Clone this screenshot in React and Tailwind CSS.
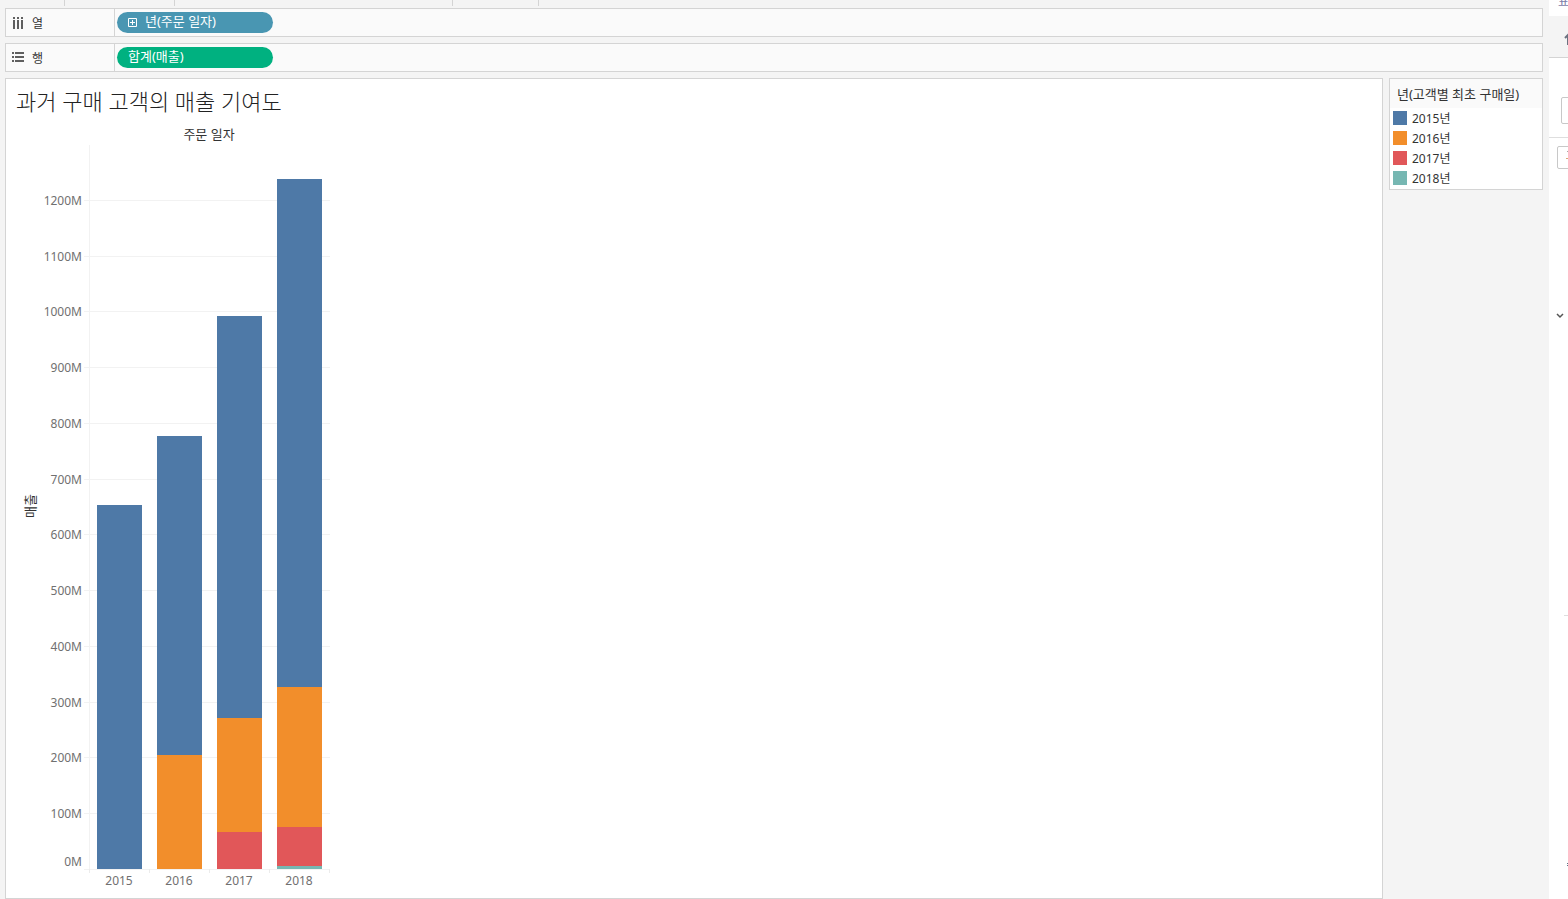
import React from "react";

const YEARS = [
  { label: "2015년", swatch: "bg-[#4e79a7]", fill: "fill-[#4e79a7]" },
  { label: "2016년", swatch: "bg-[#f28e2b]", fill: "fill-[#f28e2b]" },
  { label: "2017년", swatch: "bg-[#e15759]", fill: "fill-[#e15759]" },
  { label: "2018년", swatch: "bg-[#76b7b2]", fill: "fill-[#76b7b2]" },
];

// sales in millions per first-purchase year (same order as YEARS)
const SALES = [
  { year: 2015, values: [653, 0, 0, 0] },
  { year: 2016, values: [572, 205, 0, 0] },
  { year: 2017, values: [721, 205, 66, 0] },
  { year: 2018, values: [911, 250, 70, 6] },
];

const TICKS = [0, 100, 200, 300, 400, 500, 600, 700, 800, 900, 1000, 1100, 1200];

const PLOT = { left: 83, right: 324, top: 28, bottom: 752 };
const COLUMN = 60;
const BAR = 45;

const yFor = (value) => PLOT.bottom - Math.round(value * 0.5577);

function ColumnsIcon() {
  return (
    <svg className="h-3 w-3 fill-[#5f5f5f]" viewBox="0 0 12 12" aria-hidden="true">
      {[1, 5, 9].map((x) => (
        <g key={x}>
          <rect x={x} y="0" width="2" height="2" />
          <rect x={x} y="3" width="2" height="9" />
        </g>
      ))}
    </svg>
  );
}

function RowsIcon() {
  return (
    <svg className="h-3 w-3 fill-[#5f5f5f]" viewBox="0 0 12 12" aria-hidden="true">
      {[0, 4, 8].map((y) => (
        <g key={y}>
          <rect x="0" y={y} width="2" height="2" />
          <rect x="3" y={y} width="9" height="2" />
        </g>
      ))}
    </svg>
  );
}

function ExpandIcon() {
  return (
    <svg className="mt-0.5 h-[9px] w-[9px]" viewBox="0 0 9 9" fill="none" stroke="white" aria-hidden="true">
      <path d="M.5 .5h8v8h-8z M2 4.5h5 M4.5 2v5" />
    </svg>
  );
}

function Shelf({ icon, label, children }) {
  return (
    <section className="flex h-[29px] border border-[#d4d4d4] bg-[#fafafa]">
      <div className="flex w-[109px] items-center gap-2 border-r border-[#d4d4d4] pl-1.5">
        {icon}
        <h2 className="pt-0.5 text-xs leading-4">{label}</h2>
      </div>
      <div className="flex flex-1 items-center pl-0.5">{children}</div>
    </section>
  );
}

function Chart() {
  return (
    <svg className="block h-[776px] w-[330px]" viewBox="0 0 330 776" role="img" aria-label="매출">
      <text x="203" y="22" textAnchor="middle" className="fill-[#333] text-[13px]">
        주문 일자
      </text>
      <text
        transform="translate(29 389) rotate(-90)"
        textAnchor="middle"
        className="fill-[#333] text-[13px]"
      >
        매출
      </text>

      {TICKS.map((tick) => (
        <g key={tick}>
          <rect x={PLOT.left - 5} y={yFor(tick)} width={PLOT.right - PLOT.left + 5} height="1" className="fill-[#f2f2f2]" />
          <text
            x="76"
            y={tick === 0 ? yFor(tick) - 3 : yFor(tick) + 5}
            textAnchor="end"
            className="fill-[#707070] text-xs"
          >
            {tick}M
          </text>
        </g>
      ))}

      <rect x={PLOT.left} y={PLOT.top} width="1" height={PLOT.bottom - PLOT.top} className="fill-[#f2f2f2]" />
      {[0, 1, 2, 3, 4].map((i) => (
        <rect key={i} x={PLOT.left + i * COLUMN} y={PLOT.bottom} width="1" height="4" className="fill-[#ececec]" />
      ))}

      {SALES.map(({ year, values }, column) => {
        const x = PLOT.left + column * COLUMN + 8;
        return (
          <g key={year}>
            {values.map((value, i) => {
              // later cohorts sit at the bottom of the stack
              const below = values.slice(i + 1).reduce((sum, v) => sum + v, 0);
              const top = yFor(below + value);
              return (
                <rect key={i} x={x} y={top} width={BAR} height={yFor(below) - top} className={YEARS[i].fill} />
              );
            })}
            <text x={x + 22} y="768" textAnchor="middle" className="fill-[#707070] text-xs">
              {year}
            </text>
          </g>
        );
      })}
    </svg>
  );
}

function Legend() {
  return (
    <aside className="w-[154px] self-start border border-[#d4d4d4] bg-white">
      <h2 className="bg-[#fafafa] pt-1.5 pb-1 pl-[7px] text-[13px] leading-[19px] whitespace-nowrap">
        년(고객별 최초 구매일)
      </h2>
      <ul className="pb-px">
        {YEARS.map(({ label, swatch }) => (
          <li key={label} className="flex h-5 items-center gap-[5px] pl-[3px] text-xs">
            <span className={`h-3.5 w-3.5 ${swatch}`} />
            <span className="pt-0.5">{label}</span>
          </li>
        ))}
      </ul>
    </aside>
  );
}

// left edge of the neighbouring panel
function SidePanel() {
  return (
    <div className="w-[19px] shrink-0 overflow-hidden bg-white">
      <div className="h-4 overflow-hidden pl-[9px]">
        <p className="-mt-1 text-xs leading-3 text-[#7c7ca8]">표</p>
      </div>
      <div className="flex h-[42px] items-center border-b border-[#d4d4d4] bg-[#f4f4f4] pt-1 pl-[15px]">
        <svg className="h-3 w-3 shrink-0" viewBox="0 0 12 12" fill="none" stroke="#6b7280" strokeWidth="2" aria-hidden="true">
          <path d="M1 5l3-3 3 3M4 2v10" />
        </svg>
      </div>
      <div className="border-b border-[#dedede] pt-[39px] pb-[13px] pl-3">
        <div className="h-[27px] w-10 rounded-[2px] border border-[#c8c8c8]" />
      </div>
      <div className="pt-2 pl-2">
        <div className="h-[23px] w-10 rounded-[2px] border border-[#c8c8c8] pt-1 pl-2">
          <svg className="block h-2 w-3" viewBox="0 0 12 8" aria-hidden="true">
            <path d="M1 .5h4" stroke="#a9a9a9" />
            <path d="M0 7.5h2" stroke="#d8a878" />
          </svg>
        </div>
      </div>
      <div className="pt-[143px] pl-[7px]">
        <svg className="block h-2 w-2" viewBox="0 0 8 8" fill="none" stroke="#555" strokeWidth="1.5" aria-hidden="true">
          <path d="M1 2l3 3 3-3" />
        </svg>
      </div>
      <div className="pt-[295px] pl-[15px]">
        <div className="h-px bg-[#dedede]" />
      </div>
      <div className="pt-[247px] pl-[18px]">
        <div className="h-[3px] border-y border-[#5b7083]" />
      </div>
    </div>
  );
}

export default function App() {
  return (
    <div className="flex min-h-screen overflow-hidden bg-[#f4f4f4] font-['Noto_Sans','Noto_Sans_CJK_KR',sans-serif] text-[#333]">
      <main className="flex min-w-0 flex-1 flex-col gap-1.5 px-1.5 pl-[5px]">
        <div className="-mb-1.5 flex h-2 items-start">
          <div className="h-1.5 w-[60px] border-r border-[#d4d4d4]" />
          <div className="h-1.5 w-[110px] border-r border-[#d4d4d4]" />
          <div className="h-1.5 w-[278px] border-r border-[#d4d4d4]" />
          <div className="h-1.5 w-[86px] border-r border-[#d4d4d4]" />
        </div>

        <Shelf icon={<ColumnsIcon />} label="열">
          <button className="flex h-[21px] w-[156px] items-center gap-2 rounded-full bg-[#4996b2] pb-[3px] pl-[11px] text-[13px] leading-4 text-white">
            <ExpandIcon />
            년(주문 일자)
          </button>
        </Shelf>
        <Shelf icon={<RowsIcon />} label="행">
          <button className="flex h-[21px] w-[156px] items-center rounded-full bg-[#00b180] pb-[3px] pl-[11px] text-[13px] leading-4 text-white">
            합계(매출)
          </button>
        </Shelf>

        <div className="flex flex-1 gap-1.5">
          <section className="min-w-0 flex-1 border border-[#d4d4d4] bg-white">
            <h1 className="px-2.5 pt-2 pb-0.5 text-[22px] leading-7 font-light text-[#222]">과거 구매 고객의 매출 기여도</h1>
            <Chart />
          </section>
          <Legend />
        </div>
      </main>
      <SidePanel />
    </div>
  );
}
